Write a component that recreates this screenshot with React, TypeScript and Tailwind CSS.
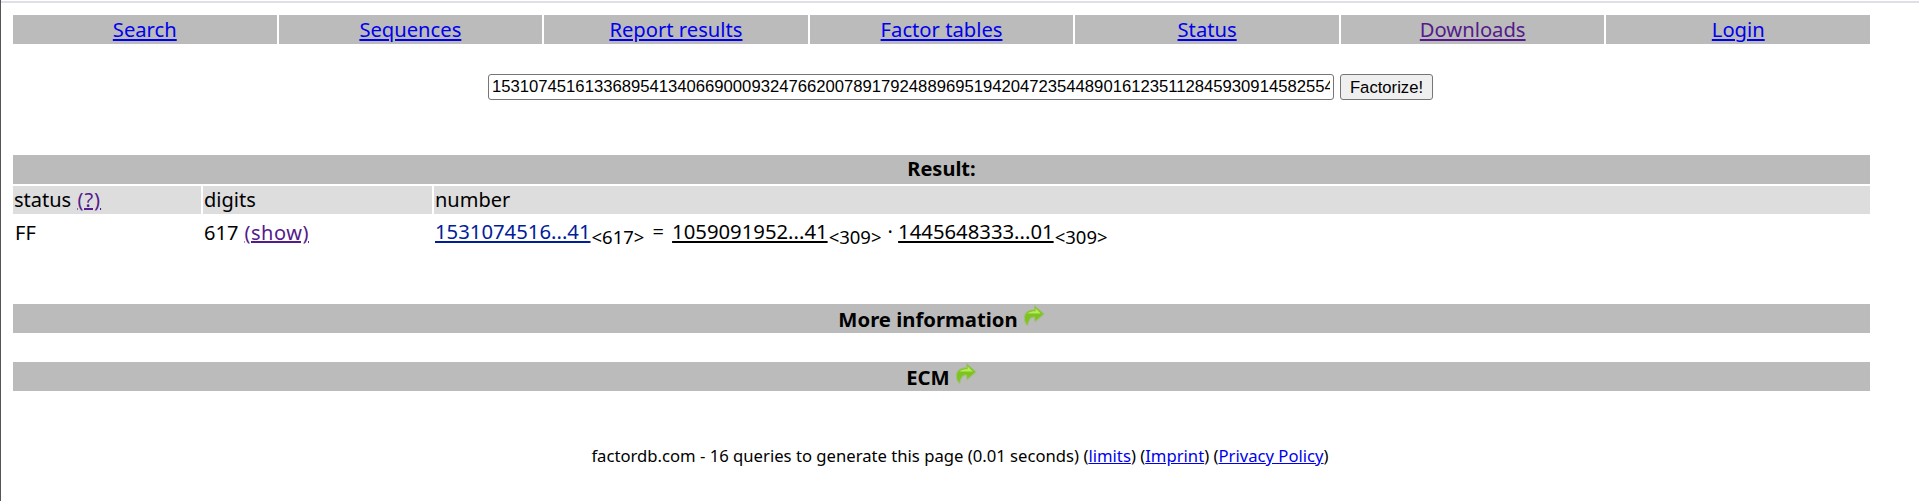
const nav = [
  { t: "Search", v: false },
  { t: "Sequences", v: false },
  { t: "Report results", v: false },
  { t: "Factor tables", v: false },
  { t: "Status", v: false },
  { t: "Downloads", v: true },
  { t: "Login", v: false },
];

function Arrow() {
  return (
    <svg width="22" height="23" viewBox="0 0 21 21" className="inline-block align-[-1px] ml-[5px]">
      <path d="M11 1 L20 9 L11.5 16.5 L11 12 C8 11.5 5.5 14 4.5 20 C1.5 17.5 0.5 13 2 9.5 C3.5 6.5 7 5 11 5 Z" fill="#7cc51f" stroke="#a3bd7c" strokeWidth="1" strokeLinejoin="round" />
      <path d="M12 3.5 L17 8.5 L4 8.5 C6 7 8.5 6.4 12 6.4 Z" fill="#b8ea5a" />
    </svg>
  );
}

function Bar({ children }: { children: React.ReactNode }) {
  return (
    <div className="h-[29px] bg-[#bbbbbb] text-center font-bold leading-[28px]">{children}</div>
  );
}

export default function App() {
  return (
    <div className="relative h-[501px] w-[1919px] overflow-hidden bg-white border-l border-[#555] text-[20px] text-black font-['Noto_Sans',sans-serif]">
      <div className="h-[3px] mt-0 border-t border-b-2 border-t-white border-b-[#dfdfe6]" />
      <div className="ml-[12px] w-[1857px] mt-[12px] flex gap-[2px]">
        {nav.map((n) => (
          <div key={n.t} className="flex-1 h-[29px] bg-[#bbbbbb] text-center leading-[28px] text-[20.2px]">
            <a href="#" className={n.v ? "underline text-[#551a8b]" : "underline text-[#0000ee]"}>{n.t}</a>
          </div>
        ))}
      </div>
      <div className="mt-[30px] ml-[487px] flex gap-[6px] font-['Liberation_Sans',sans-serif] text-[16.67px]">
        <input
          readOnly
          value="153107451613368954134066900093247662007891792488969519420472354489016123511284593091458255437"
          className="w-[846px] h-[26px] border border-[#767676] rounded-[3px] px-[3px] bg-white text-black outline-none"
        />
        <button className="w-[93px] h-[26px] border border-[#767676] rounded-[3px] bg-[#efefef] text-black">Factorize!</button>
      </div>
      <div className="ml-[12px] w-[1857px] mt-[55px]">
        <Bar>Result:</Bar>
        <div className="mt-[2px] grid grid-cols-[188px_229px_1fr] gap-x-[2px] h-[28px] leading-[27px]">
          <div className="bg-[#dddddd] pl-[1px]">status <a href="#" className="underline text-[#551a8b] tracking-[1px] ml-[1px]">(?)</a></div>
          <div className="bg-[#dddddd] pl-[1px]">digits</div>
          <div className="bg-[#dddddd] pl-[1px]">number</div>
        </div>
        <div className="mt-[3px] grid grid-cols-[188px_229px_1fr] gap-x-[2px] h-[29px] leading-[28px]">
          <div className="pl-[2px] pt-[2px]">FF</div>
          <div className="pl-[1px] pt-[2px]">617 <a href="#" className="underline text-[#551a8b] tracking-[0.5px] ml-[1px]">(show)</a></div>
          <div className="pl-[1px] whitespace-nowrap">
            <a href="#" className="underline text-[#002099] text-[20.3px]">1531074516...41</a>
            <span className="text-[18.5px] relative top-[5px] ml-[1px]">&lt;617&gt;</span>
            <span className="ml-[8px] mr-[3px]">= </span>
            <a href="#" className="underline text-black text-[20.3px]">1059091952...41</a>
            <span className="text-[18.5px] relative top-[5px] ml-[1px]">&lt;309&gt;</span>
            <span className="ml-[6px]">· </span>
            <a href="#" className="underline text-black text-[20.3px]">1445648333...01</a>
            <span className="text-[18.5px] relative top-[5px] ml-[1px]">&lt;309&gt;</span>
          </div>
        </div>
        <div className="mt-[58px]"><Bar><span className="text-[20.3px] relative top-[1px]">More information</span><Arrow /></Bar></div>
        <div className="mt-[29px]"><Bar><span className="text-[20.3px] relative top-[1px]">ECM</span><Arrow /></Bar></div>
      </div>
      <div className="mt-[53px] text-center text-[16.67px] leading-[24px] whitespace-nowrap">
        factordb.com - 16 queries to generate this page (0.01 seconds) (<a href="#" className="underline text-[#0000ee]">limits</a>) (<a href="#" className="underline text-[#0000ee]">Imprint</a>) (<a href="#" className="underline text-[#0000ee]">Privacy Policy</a>)
      </div>
    </div>
  );
}
